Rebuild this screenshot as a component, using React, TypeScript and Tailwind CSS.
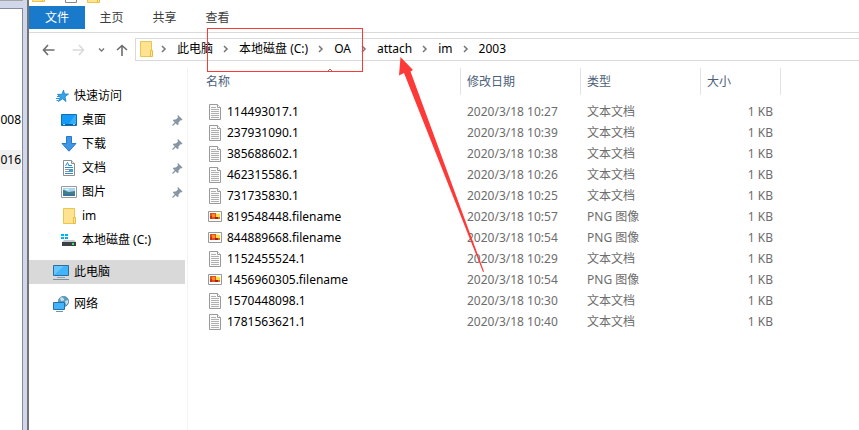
import React from "react";

const files = [
  { name: "114493017.1", time: "10:27", png: false },
  { name: "237931090.1", time: "10:39", png: false },
  { name: "385688602.1", time: "10:38", png: false },
  { name: "462315586.1", time: "10:26", png: false },
  { name: "731735830.1", time: "10:25", png: false },
  { name: "819548448.filename", time: "10:57", png: true },
  { name: "844889668.filename", time: "10:54", png: true },
  { name: "1152455524.1", time: "10:29", png: false },
  { name: "1456960305.filename", time: "10:54", png: true },
  { name: "1570448098.1", time: "10:30", png: false },
  { name: "1781563621.1", time: "10:40", png: false },
];

const path = ["此电脑", "本地磁盘 (C:)", "OA", "attach", "im", "2003"];

function FolderIcon() {
  return (
    <svg width="16" height="16" viewBox="0 0 16 16" className="shrink-0">
      <path d="M2.5.5h11v15h-11z" fill="#ffe391" stroke="#eac54f" />
      <path d="M12.5 9.500h2v6h-2z" fill="#ffe9a6" stroke="#e8bd3d" />
    </svg>
  );
}

function TextFileIcon() {
  return (
    <svg width="14" height="16" viewBox="0 0 14 16" className="shrink-0">
      <path d="M1.5.5h8l3 3v12h-11z" fill="#fafafa" stroke="#9a9a9a" />
      <path d="M9.5.5v3h3" fill="#fff" stroke="#9a9a9a" />
      <path d="M3 3.5h5M3 5.5h8M3 7.5h8M3 9.5h8M3 11.5h8M3 13.5h8" stroke="#b0b0b0" />
    </svg>
  );
}

function PngFileIcon() {
  return (
    <svg width="14" height="12" viewBox="0 0 14 12" className="shrink-0">
      <path d="M.5.5h13v10H.5z" fill="#fff" stroke="#999" />
      <path d="M2 2h6v6H2z" fill="#e2501c" />
      <path d="M2 5h2v3H2z" fill="#c9301a" />
      <path d="M4 3h3v3H4z" fill="#f4901f" />
      <path d="M8 3h4v4H8z" fill="#ffdc3a" />
      <path d="M7 6h3v2H7z" fill="#a81f1c" />
      <path d="M10 6h2v2h-2z" fill="#d8741c" />
      <path d="M8 2h4v1H8z" fill="#fff3c8" />
    </svg>
  );
}

function StarIcon() {
  return (
    <svg width="16" height="16" viewBox="0 0 16 16" className="shrink-0">
      <path d="M9.500 2l1 4H14.500l-3.500 2.800L12 13.500l-3.500-2.700L4.500 13.500l1.600-4.300L3.500 6.300h4.500z" fill="#35a4ea" stroke="#1c7fc6" strokeWidth=".8" />
      <path d="M3 8.500h2M2 10.500h3M2.500 12.500h2" stroke="#2b8fd6" />
    </svg>
  );
}

function DesktopIcon() {
  return (
    <svg width="16" height="16" viewBox="0 0 16 16" className="shrink-0">
      <path d="M.5 2.500h15v11H.5z" fill="#169bf5" stroke="#0b72ba" />
      <path d="M8 12L14 3h1v9z" fill="#38adfa" />
      <path d="M1 12.500h14" stroke="#0d5c96" />
      <path d="M2 12.500h2M12 12.500h2" stroke="#9cd6ff" />
    </svg>
  );
}

function DownloadIcon() {
  return (
    <svg width="16" height="16" viewBox="0 0 16 16" className="shrink-0">
      <path d="M5.500.5h5v7h4.500L8 15.200 1 7.500h4.500z" fill="#3e97e6" stroke="#2579c8" />
    </svg>
  );
}

function DocumentIcon() {
  return (
    <svg width="16" height="16" viewBox="0 0 16 16" className="shrink-0">
      <path d="M2.500.5h8l3 3v12h-11z" fill="#fff" stroke="#8a8f94" />
      <path d="M10.500.5v3h3" fill="#eee" stroke="#8a8f94" />
      <path d="M4.500 6l2-3.500L8 6M8 5.500h3" stroke="#2d8bd0" fill="none" />
      <path d="M4 7.500h8M4 13.500h8" stroke="#2d8bd0" />
      <path d="M4 9.500h4M4 11.500h4" stroke="#8a9299" />
      <path d="M8 9h4v3H8z" fill="#4a9bc8" />
    </svg>
  );
}

function PictureIcon() {
  return (
    <svg width="16" height="16" viewBox="0 0 16 16" className="shrink-0">
      <path d="M.5 2.500h15v11H.5z" fill="#fff" stroke="#969b9f" />
      <path d="M2 4h12v8H2z" fill="#a9d4f1" />
      <path d="M2 6c3 0 4 2 6 2s4-1 6-1v3H2z" fill="#437f86" />
      <path d="M2 10h12v2H2z" fill="#3974a0" />
      <path d="M4 5.500h4" stroke="#e7f5ff" />
    </svg>
  );
}

function DriveIcon() {
  return (
    <svg width="16" height="16" viewBox="0 0 16 16" className="shrink-0">
      <path d="M0 2h3v2H0zM4 2h3v2H4zM0 5h3v2H0zM4 5h3v2H4z" fill="#00b4ee" />
      <path d="M3 8h10l2 2H1z" fill="#c7cbcd" />
      <path d="M1 10h14v4H1z" fill="#3b4247" />
      <path d="M11 12h2" stroke="#42e657" strokeWidth="2" />
    </svg>
  );
}

function ComputerIcon() {
  return (
    <svg width="16" height="16" viewBox="0 0 16 16" className="shrink-0">
      <path d="M.5 1.500h15v10H.5z" fill="#42b4fb" stroke="#2c6f9f" />
      <path d="M1 11L11 2H1z" fill="#68c6ff" />
      <path d="M4 13.500h8" stroke="#8ba6ba" />
      <path d="M0 15.500h16" stroke="#7990a3" />
    </svg>
  );
}

function NetworkIcon() {
  return (
    <svg width="16" height="16" viewBox="0 0 16 16" className="shrink-0">
      <circle cx="10.500" cy="5.500" r="5.200" fill="#5b9bbd" stroke="#437a99" strokeWidth=".6" />
      <path d="M7 2c2-1.500 3 0 4 1s-1 2-3 2zM12 5l3-1v3l-2 2z" fill="#c4e2ee" />
      <path d="M.5 6.500h11v7H.5z" fill="#42b4fb" stroke="#2a70a5" />
      <path d="M3 15.500h7" stroke="#6a94b2" />
    </svg>
  );
}

function PinIcon() {
  return (
    <svg width="11" height="11" viewBox="0 0 11 11" className="ml-auto shrink-0">
      <path d="M6 0l4.500 4.500-1 1-1-.2L6.500 7.500v2l-1 .8L.8 5.500l1-1h2L6 2.500 5.500 1z" fill="#8796a5" />
      <path d="M3.500 7.500L.5 10.500" stroke="#8796a5" strokeWidth="1.200" />
    </svg>
  );
}

function Chevron() {
  return (
    <svg width="26" height="10" viewBox="0 0 26 10" className="shrink-0">
      <path d="M11 2l3 3-3 3" fill="none" stroke="#7a7a7a" strokeWidth="1.600" />
    </svg>
  );
}

const places = [
  { label: "桌面", icon: <DesktopIcon />, pinned: true },
  { label: "下载", icon: <DownloadIcon />, pinned: true },
  { label: "文档", icon: <DocumentIcon />, pinned: true },
  { label: "图片", icon: <PictureIcon />, pinned: true },
  { label: "im", icon: <FolderIcon />, pinned: false },
  { label: "本地磁盘 (C:)", icon: <DriveIcon />, pinned: false },
];

function BackgroundWindow() {
  return (
    <aside className="flex w-[29px] shrink-0 border-r-2 border-[#747474] bg-[#d0d7eb]">
      <div className="flex w-[23px] flex-col">
        <div className="h-2 border-t border-[#a5a5a5]" />
        <div className="flex grow flex-col border-t border-r border-[#858b9b] bg-white pt-[101px] pr-px text-right">
          <span className="h-5 leading-5">008</span>
          <span className="mt-5 h-5 bg-[#f0f0f0] leading-5">016</span>
        </div>
      </div>
    </aside>
  );
}

function Ribbon() {
  return (
    <header>
      <div className="flex h-1.5 items-end overflow-hidden">
        <span className="ml-px flex h-4 items-end pb-1"><FolderIcon /></span>
        <svg width="14" height="16" viewBox="0 0 14 16" className="ml-[18px] shrink-0">
          <path d="M1.500.5h11v12h-11z" fill="#fff" stroke="#8a8a8a" />
        </svg>
        <span className="ml-[7px] flex h-4 items-end pb-[3px]"><FolderIcon /></span>
      </div>
      <div className="flex h-[27px] items-start border-b border-[#dadbdc]">
        <button className="h-[23px] w-14 bg-[#1979ca] text-white">文件</button>
        {["主页", "共享", "查看"].map((t) => (
          <button key={t} className="h-[23px] w-[53px] text-[#3c3c3c]">{t}</button>
        ))}
      </div>
    </header>
  );
}

function AddressBar() {
  return (
    <div className="flex h-[28px] items-end">
      <div className="flex h-[23px] w-[106px] shrink-0 items-center pl-[13px]">
        <button aria-label="后退">
          <svg width="13" height="12" viewBox="0 0 13 12"><path d="M6 1L1.500 6 6 11M1.500 6H12.500" fill="none" stroke="#6d6d6d" strokeWidth="1.600" /></svg>
        </button>
        <button aria-label="前进" className="ml-[17px]">
          <svg width="13" height="12" viewBox="0 0 13 12"><path d="M7 1l4.500 5L7 11M11.500 6H.5" fill="none" stroke="#dadada" strokeWidth="1.600" /></svg>
        </button>
        <button aria-label="最近位置" className="ml-[13px]">
          <svg width="7" height="6" viewBox="0 0 7 6"><path d="M1 1.500l2.500 2.500L6 1.500" fill="none" stroke="#777" strokeWidth="1.400" /></svg>
        </button>
        <button aria-label="上移" className="ml-[11px]">
          <svg width="12" height="12" viewBox="0 0 12 12"><path d="M1 6l5-4.500L11 6M6 1.500V12" fill="none" stroke="#6d6d6d" strokeWidth="1.600" /></svg>
        </button>
      </div>
      <nav className="flex h-[23px] min-w-0 grow items-center border-y border-l border-[#d9d9d9] pb-0.5 pl-[2px]">
        <FolderIcon />
        <span className="-ml-[3px] flex items-center">
          {path.map((p) => (
            <React.Fragment key={p}>
              <Chevron />
              <button className="whitespace-nowrap">{p}</button>
            </React.Fragment>
          ))}
        </span>
      </nav>
    </div>
  );
}

function Sidebar() {
  return (
    <nav className="mt-[7px] flex w-[159px] shrink-0 flex-col border-r border-[#f3f3f3] pt-4">
      <button className="flex h-6 items-center gap-1 pl-[25px]">
        <StarIcon />快速访问
      </button>
      {places.map((p) => (
        <button key={p.label} className="flex h-6 items-center gap-[5px] pr-1 pl-8">
          {p.icon}
          {p.label}
          {p.pinned && <PinIcon />}
        </button>
      ))}
      <button className="mt-2 mr-0.5 flex h-6 items-center gap-[5px] bg-[#d9d9d9] pl-6">
        <ComputerIcon />此电脑
      </button>
      <button className="mt-2 flex h-6 items-center gap-[5px] pl-6">
        <NetworkIcon />网络
      </button>
    </nav>
  );
}

function FileTable() {
  const head = "border-r border-[#e2e2e2] pl-1.5 text-left font-normal";
  return (
    <main className="min-w-0 grow overflow-hidden pt-[7px] pl-3">
      <table className="w-[581px] table-fixed border-separate border-spacing-0">
        <colgroup>
          <col />
          <col className="w-[120px]" />
          <col className="w-[120px]" />
          <col className="w-20" />
        </colgroup>
        <thead>
          <tr className="h-[27px] text-[#4c607a]">
            <th className={`${head} relative`}>
              名称
              <svg width="8" height="5" viewBox="0 0 8 5" className="absolute top-0 left-1/2 -translate-x-1/2">
                <path d="M1 4l3-3 3 3" fill="none" stroke="#777" />
              </svg>
            </th>
            <th className={head}>修改日期</th>
            <th className={head}>类型</th>
            <th className={head}>大小</th>
          </tr>
        </thead>
        <tbody className="text-[#6d6d6d] before:block before:h-1.5 before:content-['']">
          {files.map((f) => (
            <tr key={f.name} className="h-[21px]">
              <td className="p-0 text-black">
                <span className="flex items-center gap-[5px] pl-2">
                  {f.png ? <PngFileIcon /> : <TextFileIcon />}
                  {f.name}
                </span>
              </td>
              <td className="p-0 pl-1.5">2020/3/18 {f.time}</td>
              <td className="p-0 pl-1.5">{f.png ? "PNG 图像" : "文本文档"}</td>
              <td className="p-0 pr-2 text-right">1 KB</td>
            </tr>
          ))}
        </tbody>
      </table>
    </main>
  );
}

export default function App() {
  return (
    <div className="relative flex min-h-screen overflow-hidden bg-white font-['Noto_Sans','Noto_Sans_CJK_SC',sans-serif] text-[12px] leading-4 text-black">
      <BackgroundWindow />
      <div className="flex min-w-0 grow flex-col">
        <Ribbon />
        <AddressBar />
        <div className="flex grow">
          <Sidebar />
          <FileTable />
        </div>
      </div>
      <div className="pointer-events-none absolute top-[28px] left-[207px] h-11 w-[156px] border border-[#fb3a38]" />
      <svg width="90" height="220" viewBox="0 0 90 220" className="pointer-events-none absolute top-[55px] left-[396px]">
        <path d="M4.500 2L17 15l-2.500 1.500L88 216.500l-1 .5L8 18l-5 2.500z" fill="#fd3a38" />
      </svg>
    </div>
  );
}
